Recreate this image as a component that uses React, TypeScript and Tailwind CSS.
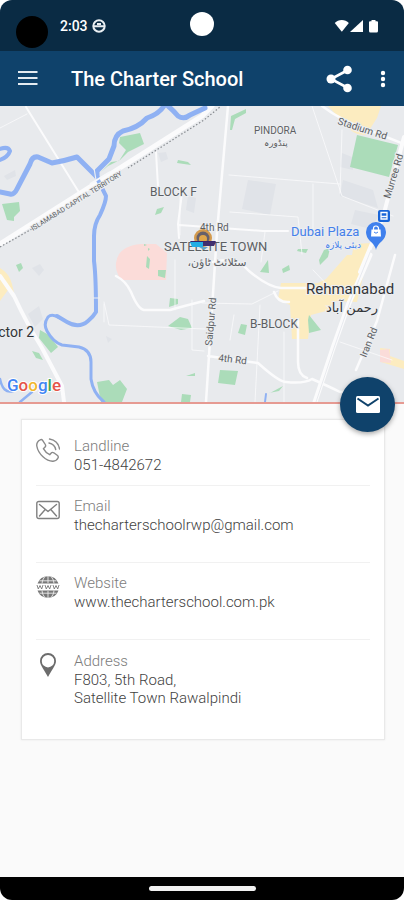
import type { ReactNode } from "react";

const road = { fill: "none", stroke: "#fbfbfc", strokeLinecap: "round", strokeLinejoin: "round" } as const;
const river = { fill: "none", stroke: "#8fb1f3", strokeLinecap: "round", strokeLinejoin: "round" } as const;
const halo = { stroke: "#eceef1", strokeWidth: 2, paintOrder: "stroke" } as const;

function StatusBar() {
  return (
    <div className="grid h-[51px] grid-cols-3 items-center rounded-t-xl bg-[#0a2b44] px-4 text-white">
      <div className="flex items-center">
        <span className="mt-3 size-8 rounded-full bg-black" />
        <span className="ml-3 text-sm font-medium">2:03</span>
        <svg className="ml-1 size-3.5" viewBox="0 0 14 14" aria-hidden="true">
          <circle cx="7" cy="7" r="5.7" fill="none" stroke="#e9eef2" strokeWidth="2" />
          <path d="M2 6.2h10v2H2zM5 4h4v2H5z" fill="#e9eef2" />
        </svg>
      </div>
      <span className="mb-1 size-6 justify-self-center rounded-full bg-white" />
      <svg className="mr-2 h-4 w-12 justify-self-end" viewBox="0 0 48 16" fill="#fff" aria-hidden="true">
        <path d="M2 4.500C6-.1 14-.1 18 4.500L10.500 14q-.5.6-1 0z" transform="translate(1 1) scale(.88)" />
        <path d="M31 2v12H18z" />
        <path d="M39.500 2h4v1.200h1.500q1 0 1 1V13q0 1.500-1.500 1.500h-6Q37 14.500 37 13V4.200q0-1 1-1h1.500z" />
      </svg>
    </div>
  );
}

function AppBar() {
  return (
    <header className="flex h-[55px] items-center bg-[#0f426b] pr-[5px] pl-4 text-white">
      <button type="button" aria-label="Open menu" className="flex size-6 items-center justify-center">
        <svg className="size-6" viewBox="0 0 24 24" aria-hidden="true">
          <path d="M2 5h19.500M2 11h19.500M2 17h19.500" stroke="#e4ebf1" strokeWidth="2" />
        </svg>
      </button>
      <h1 className="ml-[31px] flex-1 text-xl font-medium">The Charter School</h1>
      <button type="button" aria-label="Share" className="flex size-8 items-center justify-center">
        <svg className="size-7" viewBox="0 0 28 28" fill="#fff" aria-hidden="true">
          <path d="M23 5L6 14l17 9" fill="none" stroke="#fff" strokeWidth="2.600" />
          <circle cx="22.500" cy="5" r="4.300" />
          <circle cx="6" cy="14" r="4.500" />
          <circle cx="22.500" cy="23" r="4.300" />
        </svg>
      </button>
      <button type="button" aria-label="More options" className="ml-3 flex size-8 items-center justify-center">
        <svg className="h-5 w-2" viewBox="0 0 8 20" fill="#fff" aria-hidden="true">
          <circle cx="4" cy="4" r="2.200" />
          <circle cx="4" cy="10" r="2.200" />
          <circle cx="4" cy="16" r="2.200" />
        </svg>
      </button>
    </header>
  );
}

function AreaMap() {
  return (
    <svg
      viewBox="0 106 404 296"
      preserveAspectRatio="xMidYMid slice"
      className="block h-[296px] w-full bg-[#e8eaed]"
      role="img"
      aria-label="Map of Satellite Town, Rawalpindi"
      fontFamily='Roboto, "DejaVu Sans", sans-serif'
    >
      <g fill="#e0e3e8">
        <path d="M248 180l28 4-6 31-28-6zM342 153l10 4 1 13-13-3zM343 180l30 10 5 18-38-12zM355 210l24 5-8 14-20-5zM32 268l8-4 4 6-5 6zM28 314l11-8 4 13-8 8zM188 195l8 3-2 15-8-3zM158 153l8-1 2 7-7 3zM106 336l6 3-4 4zM4 176l11-6 1 6-9 4z" />
      </g>
      <g fill="#fcecc0">
        <path d="M328 106h53l-4 12-11 17q-13 1-22-12zM347 255h21l-11 47-22-1-9 10-15 4-3 24h-16l-2-34-12-6 3-16h37l8-4zM0 268q9 5 12 16l2 9-6-3-8 11zM380 348l10 1v7l14 5v8l-23-7zM354 244l17-1-2 12h-17z" />
      </g>
      <path d="M116 263q2-17 25-19h15l11 9-1 27h-45q-6-9-5-17zM380 350l9-1 2 14-11-1z" fill="#fbdcd9" />
      <g fill="#abdcb9">
        <path d="M357 135l41 10-9 32-39-10zM120 137l20-4 4 11-16 8-8 8-12 6-7 6 10-10 8-1 7-11-7-7zM231 116l15-7v4l-11 6-3 11h-2zM2 204l17-2 1 9-6 6v4l-7-1zM16 265l5-2 2 5-4 4zM178 160l10 2 3 3-14-2zM157 209l7-2-3 6-6 2zM298 249h10l-2 4-9-2zM324 250l6-2-2 9-8 8-1-5zM260 272l8-12 1 13zM282 269l7-4 1 5-7 3zM309 315l12 15-12 3-1-13zM241 324l6 1-2 10-7-2zM220 370l18 1-3 14-17-2zM170 298l8 1v5l-9 3zM168 326l12-9 8 2 4 9-11 2zM40 330l9 5 9 12-7 6-12-15zM32 351l7 2 4 7-7-2zM97 382l12-2 4 5 7-5 7 9-5 13h-21zM182 394l9 1-1 7h-9zM186 376l9-3v3zM270 393l13-7-4 5-10 2zM147 256l3 3-1 10-3-2zM158 270h8l-1 8-7-2zM148 248l2 1-2 2zM144 244l3 1-3 1z" />
      </g>
      <g {...road} strokeWidth="1" opacity=".75">
        <path d="M0 128l27-14M104 302l5 23 96 4M104 304v18M312 106l30 90 51 20M342 130l-2 63M229 175l111 9M313 184v48M230 212l68 5 4 37M284 332v70M260 305l-5 97M192 300v50l12 1M202 303l50 1 26-13M313 270l22 23M180 185v50M340 342l52 18M175 260v50M230 340l4-25M265 232l-4 30" />
      </g>
      <g {...road}>
        <path d="M156 152l2 35M26 107l54 87M182 193l-4 31 1 14M179 225l84 6h25" strokeWidth="2" />
        <path d="M228 106l-11 126-11 170M116 276q10 5 15 16 7 17 13 18h26q14-4 34-9M213 262q24-6 36 9 19 16 32 17h29M274 292q4 11 15 10M208 356l50 7q21 19 28 19 18 2 26-3 16 7 28 13h22M298 320v42q0 13 9 16M395 255l-18 66-21 49M322 106q20 15 42 22l40 16" strokeWidth="2.500" />
        <path d="M404 137l-21 80-23 55M0 276l14 20q13 28 28 52l20 38 2 16" strokeWidth="4" />
        <path d="M370 255l-21 48-16 45-18 54M0 244l202-128 10-10" strokeWidth="5" />
      </g>
      <path d="M371 250l-21 52-16 46-18 54" fill="none" stroke="#dfe3e9" strokeWidth=".7" />
      <path d="M0 247l32-18M128 168l76-48 16-13" fill="none" stroke="#85898e" strokeWidth="1.200" strokeDasharray="1.500 2" />
      <g {...river}>
        <path d="M0 192l10 2q4 1 7-5l13-25q2-8 8-7l14 6q12-2 25-6l20 20" strokeWidth="5" />
        <path d="M164 106q-5 8-17 12-9 10-24 13-9 4-9 15l-5 13-12 12v6M168 106q5 4 10 10 6 4 12-1l15-7" strokeWidth="5" />
        <path d="M0 149q8-3 10 2-2 6-10 9" strokeWidth="4" />
        <path d="M97 178l9 18q0 6-6 19-6 9-6 21v25q2 15 2 51-3 5-8 9-9 8-21 1l-10-6" strokeWidth="4" />
        <path d="M60 318q-8-5-12-1-5 7-1 14 6 11 15 14l17 2q12 3 12 15v17q2 14 13 23" strokeWidth="3" />
        <path d="M0 379q3 15 13 12M20 402l12-10" strokeWidth="2.500" />
        <path d="M266 394l-1 8" strokeWidth="2" />
      </g>
      <path d="M93 298h7M94 168l2 12" stroke="#eef0f4" strokeWidth="1.200" />
      <path d="M90 184l20-12" stroke="#f7f8fa" strokeWidth="2" />

      <g fill="#5c5f63" {...halo}>
        <text fontSize="7" transform="translate(33 231) rotate(-32)">ISLAMABAD CAPITAL TERRITORY</text>
        <text x="150" y="196" fontSize="12">BLOCK F</text>
        <text x="254" y="134" fontSize="10">PINDORA</text>
        <text x="276" y="146" fontSize="9" textAnchor="middle">پنڈورہ</text>
        <text x="164" y="251" fontSize="13">SATELLITE TOWN</text>
        <text x="217" y="266" fontSize="11" textAnchor="middle" direction="rtl">سٹلائٹ ٹاؤن،</text>
        <text x="250" y="328" fontSize="12">B-BLOCK</text>
        <text x="200" y="231" fontSize="10">4th Rd</text>
        <text fontSize="10" transform="translate(218 361) rotate(7)">4th Rd</text>
        <text fontSize="10" transform="translate(212 346) rotate(-85)">Saidpur Rd</text>
        <text fontSize="10" transform="translate(337 124) rotate(18)">Stadium Rd</text>
        <text fontSize="10" transform="translate(390 199) rotate(-73)">Murree Rd</text>
        <text fontSize="10" transform="translate(366 358) rotate(-68)">Iran Rd</text>
      </g>
      <g fill="#333538" {...halo}>
        <text x="306" y="294" fontSize="15">Rehmanabad</text>
        <text x="352" y="312" fontSize="13" textAnchor="middle">رحمن آباد</text>
        <text x="34" y="337" fontSize="14" textAnchor="end">ctor 2</text>
      </g>
      <g fill="#4580ea" {...halo}>
        <text x="291" y="236" fontSize="13">Dubai Plaza</text>
        <text x="343" y="248" fontSize="9" textAnchor="middle">دبئی پلازہ</text>
      </g>

      <path d="M376 250q-1-5-6-9-4-4-4-9a10 10 0 0 1 20 0q0 5-4 9-5 4-6 9z" fill="#3f80ed" />
      <path d="M371.500 229.500h9l.5 7h-10z" fill="#fff" />
      <path d="M373.500 231v-2.500a2.500 2.500 0 0 1 5 0V231" fill="none" stroke="#fff" strokeWidth="1.200" />
      <path d="M374 232q2 2.500 4 0" fill="none" stroke="#3f80ed" strokeWidth="1" />
      <rect x="378" y="210" width="12" height="12" rx="2" fill="#1865d8" />
      <path d="M381 212.500h6v6.500h-6zM381 216.500h6" fill="none" stroke="#fff" strokeWidth="1.300" />

      <circle cx="203" cy="238" r="9" fill="#d39a4d" />
      <circle cx="203" cy="238" r="6.500" fill="#67606a" />
      <circle cx="203" cy="239" r="4" fill="#e0a64a" />
      <path d="M190 241h26l-2 3h-22z" fill="#36266e" />
      <path d="M190 242h13v5h-11z" fill="#22aee5" />
      <path d="M203 242h13l-2 4h-11z" fill="#40306f" />
      <path d="M199 247h9l-4 3z" fill="#5fa5cb" />

      <text x="7" y="391" fontSize="17" fontWeight="500" stroke="#fff" strokeWidth="2" paintOrder="stroke">
        <tspan fill="#4285f4">G</tspan>
        <tspan fill="#e5554a">o</tspan>
        <tspan fill="#f2b72f">o</tspan>
        <tspan fill="#4285f4">g</tspan>
        <tspan fill="#43a65b">l</tspan>
        <tspan fill="#e5554a">e</tspan>
      </text>
    </svg>
  );
}

function PhoneIcon() {
  return (
    <svg className="size-6" viewBox="0 0 24 24" fill="none" stroke="#8a8a8a" strokeWidth="1.400" strokeLinejoin="round" strokeLinecap="round" aria-hidden="true">
      <path d="M4.200 1.800Q.3 3.700.8 8q1 6 6.200 10.800 5 4.600 10 4.500 3.600-.3 5-3.300.8-1.500-.8-2.700l-3.400-2.500q-1.600-1-2.800.4l-1.300 1.500q-4-1.700-6.300-6l1.700-1.800q1-1.100.2-2.400L6.600 2.300Q5.700 1 4.200 1.800z" />
      <path d="M13.500 1q8.700 1.500 10 10M13 5q5.700 1.200 6.700 6.500" />
    </svg>
  );
}

function EnvelopeIcon() {
  return (
    <svg className="h-5 w-6" viewBox="0 0 24 20" fill="none" stroke="#808080" strokeWidth="1.400" strokeLinejoin="round" aria-hidden="true">
      <rect x=".8" y="1.500" width="22.400" height="17" rx="2" />
      <path d="M3.500 4.500l8.500 7 8.500-7M3.500 16l5.500-6.200M20.500 16L15 9.800" strokeLinecap="round" />
    </svg>
  );
}

function GlobeIcon() {
  return (
    <svg className="size-6" viewBox="0 0 24 24" fill="none" stroke="#777" aria-hidden="true">
      <path d="M1.500 8.500a11.200 11.200 0 0 1 21 0zM1.500 15.500a11.200 11.200 0 0 0 21 0z" fill="#777" stroke="none" />
      <path d="M3.500 5.800h17M3.500 18.200h17M12 1v7M12 16v7M8.500 2Q6 5 6 8.500M15.500 2Q18 5 18 8.500M6 15.500Q6 19 8.500 22M18 15.500q0 3.500-2.500 6.500" stroke="#eee" strokeWidth=".9" />
      <path d="M1 10l1.300 4L4 10.500 5.700 14 7 10M9 10l1.300 4 1.700-3.500 1.700 3.500 1.300-4M17 10l1.300 4 1.700-3.500 1.700 3.500 1.300-4" strokeWidth=".9" />
    </svg>
  );
}

function PinIcon() {
  return (
    <svg className="size-6" viewBox="0 0 24 24" aria-hidden="true">
      <path d="M12 0a8 8 0 0 0-8 8c0 4.500 4.800 9.500 8 16 3.200-6.500 8-11.500 8-16a8 8 0 0 0-8-8zm0 2a6.200 6.200 0 1 1 0 12.400A6.200 6.200 0 0 1 12 2z" fill="#6c6c6c" fillRule="evenodd" />
    </svg>
  );
}

function ContactRow({ icon, label, className, children }: { icon: ReactNode; label: string; className: string; children: ReactNode }) {
  return (
    <div className={`flex gap-3.5 ${className}`}>
      <span className="flex h-7 w-6 shrink-0 items-center justify-center">{icon}</span>
      <dl className="min-w-0 text-[15px] font-light">
        <dt className="leading-5 text-[#7c7c7c]">{label}</dt>
        <dd className="leading-[18px] text-[#424242]">{children}</dd>
      </dl>
    </div>
  );
}

export default function App() {
  return (
    <div className="bg-white">
      <div className="flex min-h-screen flex-col font-['Roboto',sans-serif]">
        <StatusBar />
        <AppBar />
        <main className="flex-1 bg-[#fafafa]">
          <section className="relative border-b-2 border-[#e69a92]">
            <AreaMap />
            <button
              type="button"
              aria-label="Send email"
              className="absolute right-[9px] -bottom-[30px] flex size-[55px] items-center justify-center rounded-full bg-[#0f426b] shadow-[0_2px_5px_rgba(0,0,0,0.35)]"
            >
              <svg className="h-5 w-6" viewBox="0 0 24 20" aria-hidden="true">
                <rect y="1" width="24" height="17" rx="1.500" fill="#fff" />
                <path d="M1.500 3.500L12 10.500l10.500-7" fill="none" stroke="#0f426b" strokeWidth="2" />
              </svg>
            </button>
          </section>
          <section className="mt-[15px] mr-[19px] mb-4 ml-[21px] border border-[#e9e9e9] bg-white px-3.5 pt-4 pb-8 shadow-[0_0_2px_rgba(0,0,0,0.08)]">
            <ContactRow icon={<PhoneIcon />} label="Landline" className="border-b border-[#f1f1f1] pb-[11px]">
              051-4842672
            </ContactRow>
            <ContactRow icon={<EnvelopeIcon />} label="Email" className="border-b border-[#f1f1f1] pt-2.5 pb-7">
              <a href="mailto:thecharterschoolrwp@gmail.com">thecharterschoolrwp@gmail.com</a>
            </ContactRow>
            <ContactRow icon={<GlobeIcon />} label="Website" className="border-b border-[#f1f1f1] pt-2.5 pb-7">
              <a href="http://www.thecharterschool.com.pk">www.thecharterschool.com.pk</a>
            </ContactRow>
            <ContactRow icon={<PinIcon />} label="Address" className="pt-[11px]">
              F803, 5th Road,
              <br />
              Satellite Town Rawalpindi
            </ContactRow>
          </section>
        </main>
        <footer className="flex h-[23px] items-center justify-center rounded-b-xl bg-black">
          <span className="h-[5px] w-[107px] rounded-full bg-[#f1f1f1]" />
        </footer>
      </div>
    </div>
  );
}
